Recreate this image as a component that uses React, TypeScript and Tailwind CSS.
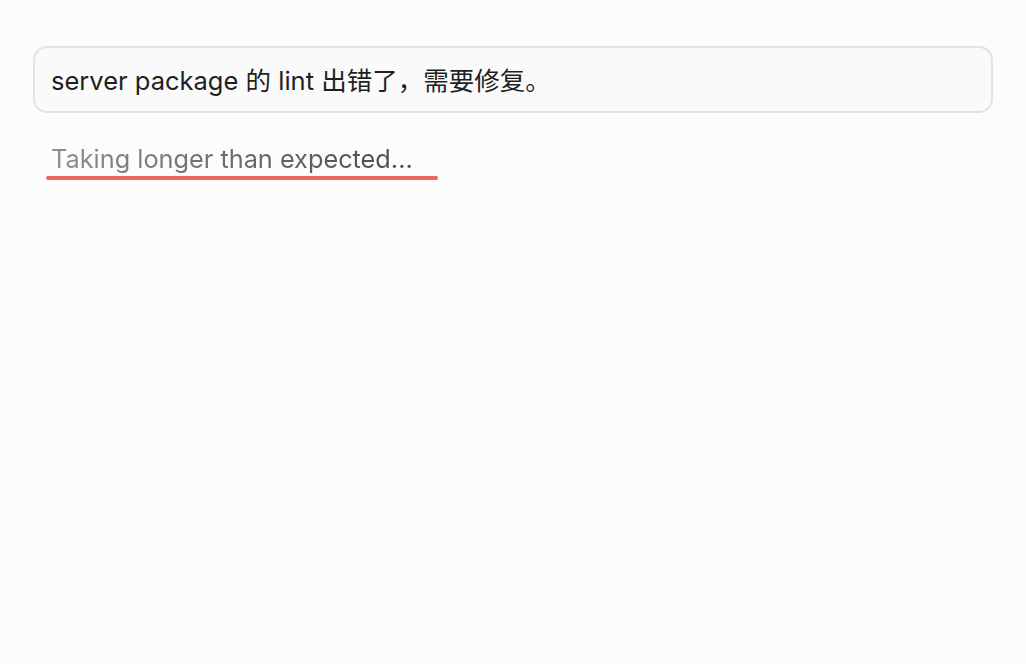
import React from "react";

export default function App() {
  return (
    <div
      className="min-h-[664px] w-full bg-[#fcfcfc] pt-[46px] px-[33px]"
      style={{ fontFamily: '"Inter", "Noto Sans CJK SC", sans-serif' }}
    >
      <div className="flex h-[67px] w-[960px] items-center rounded-[14px] border-2 border-[#e3e3e3] bg-[#fafafa] px-[16px] pt-[2px]">
        <span className="text-[25.5px] leading-[30px] text-[#1f1f1f]">server package 的 lint 出错了，需要修复。</span>
      </div>
      <div className="mt-[31px] inline-flex flex-col pl-[13px]">
        <span className="bg-gradient-to-r from-[#8f8f8f] to-[#474747] bg-clip-text pl-[5px] text-[25.3px] leading-[30px] text-transparent">
          Taking longer than expected...
        </span>
        <div className="mt-[2px] h-[4px] w-[392px] rounded-full bg-[#e8685b]" />
      </div>
    </div>
  );
}
